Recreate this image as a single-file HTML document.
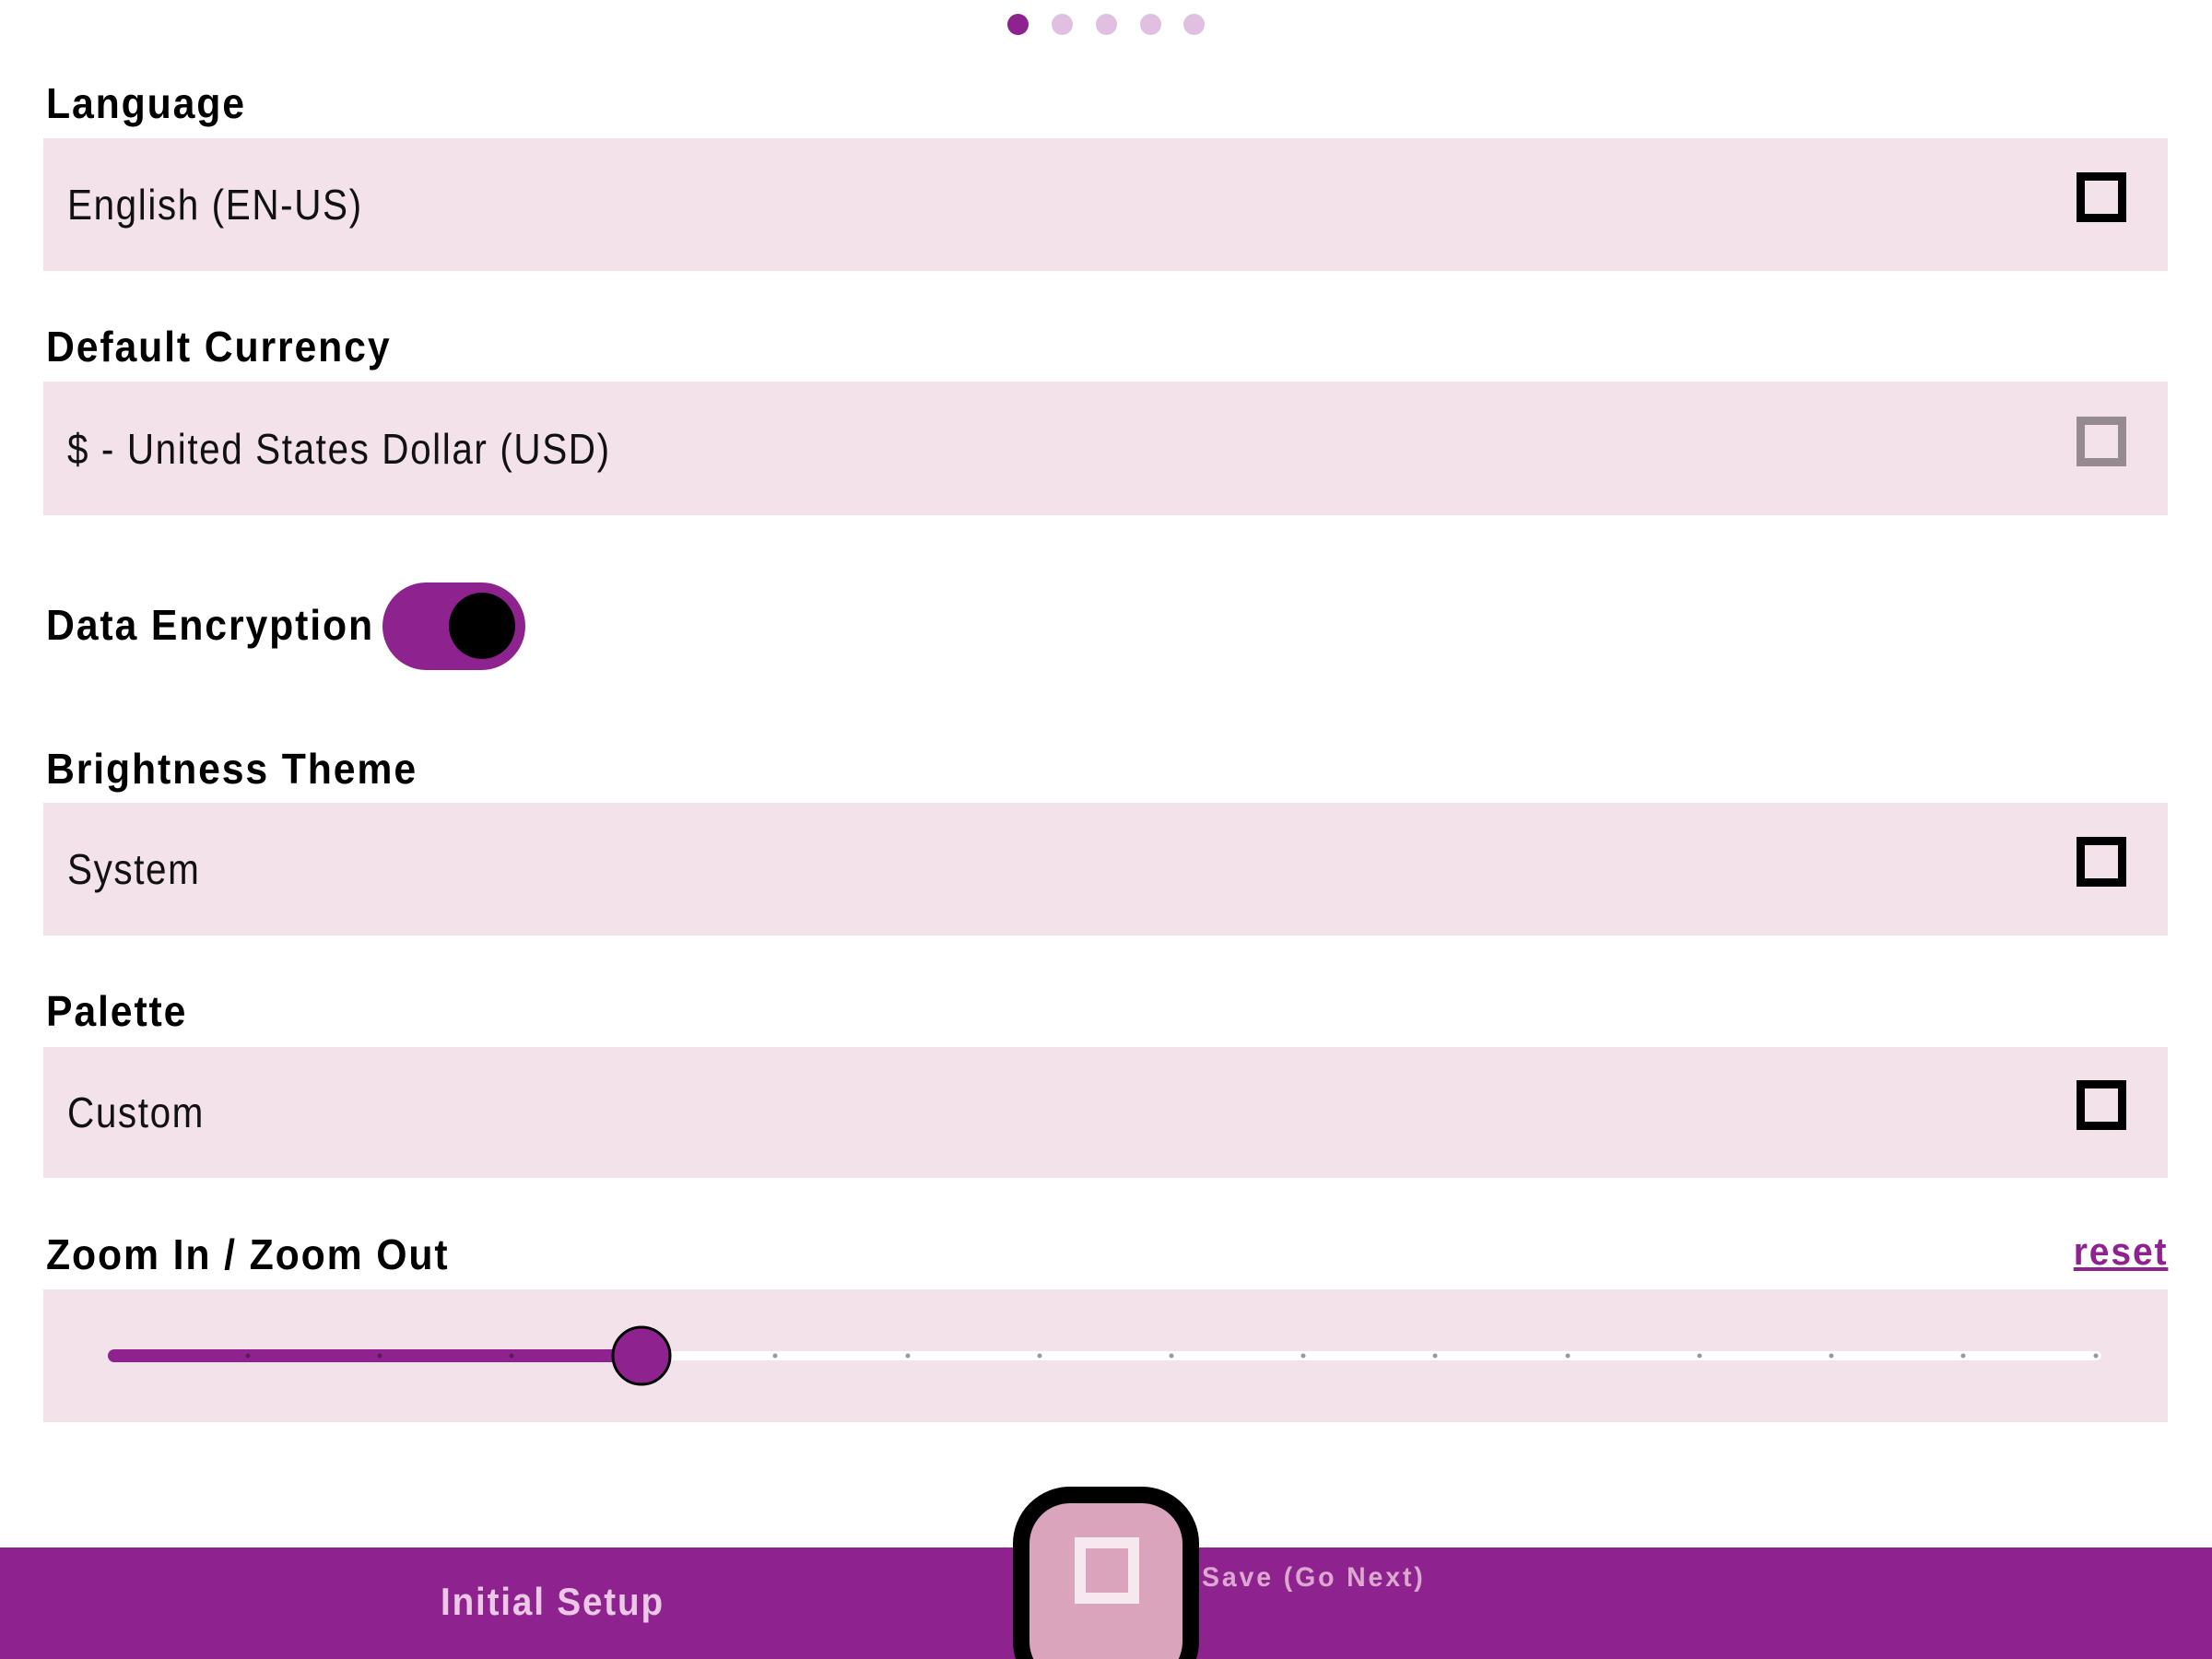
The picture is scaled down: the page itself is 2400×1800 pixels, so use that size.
<!DOCTYPE html>
<html><head><meta charset="utf-8"><style>
*{margin:0;padding:0;box-sizing:border-box}
html,body{width:2400px;height:1800px;overflow:hidden}
body{background:#fff;position:relative;font-family:"Liberation Sans",sans-serif}
.dot{position:absolute;top:15px;width:23px;height:23px;border-radius:50%;background:#e0c0e0}
.lbl{position:absolute;left:50px;font-weight:bold;font-size:46px;color:#000;letter-spacing:2px;transform:scaleX(0.93);transform-origin:left center;line-height:1}
.box{position:absolute;left:47px;width:2305px;background:#f3e2ea}
.box .t{position:absolute;left:26px;top:50%;transform:translateY(-50%) scaleX(0.88);transform-origin:left center;font-size:46px;color:#111;letter-spacing:1.8px}
.cb{position:absolute;left:2206px;top:50%;margin-top:-35px;width:54px;height:54px;border:9px solid #000}
</style></head><body>
<div class="dot" style="left:1093px;background:#8e2390"></div>
<div class="dot" style="left:1141px"></div>
<div class="dot" style="left:1189px"></div>
<div class="dot" style="left:1237px"></div>
<div class="dot" style="left:1284px"></div>

<div class="lbl" style="top:89px">Language</div>
<div class="box" style="top:150px;height:144px"><div class="t">English (EN-US)</div><div class="cb"></div></div>

<div class="lbl" style="top:353px">Default Currency</div>
<div class="box" style="top:414px;height:145px"><div class="t">$ - United States Dollar (USD)</div><div class="cb" style="border-color:#958a90"></div></div>

<div class="lbl" style="top:655px">Data Encryption</div>
<div style="position:absolute;left:415px;top:632px;width:155px;height:95px;border-radius:48px;background:#8e2390"></div>
<div style="position:absolute;left:487px;top:643px;width:72px;height:72px;border-radius:50%;background:#000"></div>

<div class="lbl" style="top:811px">Brightness Theme</div>
<div class="box" style="top:871px;height:144px"><div class="t">System</div><div class="cb"></div></div>

<div class="lbl" style="top:1074px">Palette</div>
<div class="box" style="top:1136px;height:142px"><div class="t">Custom</div><div class="cb"></div></div>

<div class="lbl" style="top:1338px">Zoom In / Zoom Out</div>
<div style="position:absolute;right:48px;top:1334px;font-size:42px;font-weight:bold;color:#8e2390;text-decoration:underline;transform:scaleX(0.93);transform-origin:right center;letter-spacing:2px">reset</div>
<div class="box" style="top:1399px;height:144px"></div>
<svg style="position:absolute;left:0;top:0" width="2400" height="1800">
<line x1="124" y1="1471" x2="2275" y2="1471" stroke="#fff" stroke-width="10" stroke-linecap="round"/>
<line x1="124" y1="1471" x2="696" y2="1471" stroke="#8e2390" stroke-width="14" stroke-linecap="round"/>
<g fill="#999">
<circle cx="841" cy="1471" r="2.5"/><circle cx="985" cy="1471" r="2.5"/><circle cx="1128" cy="1471" r="2.5"/><circle cx="1271" cy="1471" r="2.5"/><circle cx="1414" cy="1471" r="2.5"/><circle cx="1557" cy="1471" r="2.5"/><circle cx="1701" cy="1471" r="2.5"/><circle cx="1844" cy="1471" r="2.5"/><circle cx="1987" cy="1471" r="2.5"/><circle cx="2130" cy="1471" r="2.5"/><circle cx="2274" cy="1471" r="2.5"/>
</g>
<g fill="#5a1a5a"><circle cx="269" cy="1471" r="2.5"/><circle cx="412" cy="1471" r="2.5"/><circle cx="555" cy="1471" r="2.5"/></g>
<circle cx="696" cy="1471" r="31" fill="#8e2390" stroke="#000" stroke-width="3"/>
</svg>

<div style="position:absolute;left:0;top:1679px;width:2400px;height:121px;background:#8e2390"></div>
<div style="position:absolute;left:478px;top:1714px;font-size:42px;font-weight:bold;color:#ecc8e6;letter-spacing:2px;transform:scaleX(0.92);transform-origin:left center">Initial Setup</div>
<div style="position:absolute;left:1304px;top:1695px;font-size:30px;font-weight:bold;color:#dca8d0;letter-spacing:3px;transform:scaleX(0.95);transform-origin:left center">Save (Go Next)</div>
<div style="position:absolute;left:1099px;top:1613px;width:202px;height:187px;overflow:hidden">
<div style="position:absolute;left:0;top:0;width:202px;height:230px;border:18px solid #000;border-radius:62px;background:#dba4bd"></div>
</div>
<div style="position:absolute;left:1166px;top:1668px;width:70px;height:72px;border:12px solid #f6e8ef"></div>
</body></html>
